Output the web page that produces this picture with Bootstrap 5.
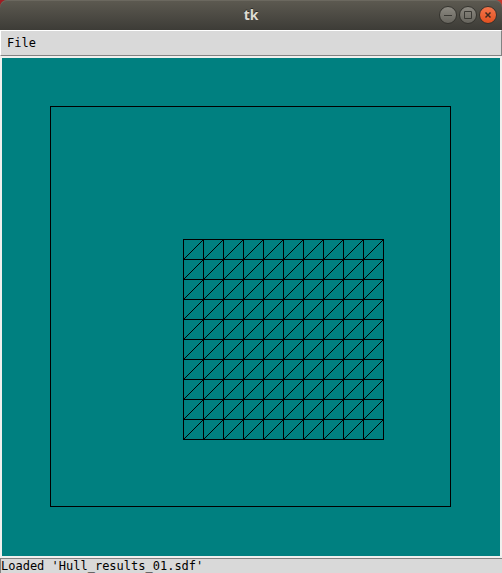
<!DOCTYPE html>
<html lang="en">
<head>
<meta charset="utf-8">
<meta name="viewport" content="width=device-width, initial-scale=1">
<title>tk</title>
<link href="https://cdn.jsdelivr.net/npm/bootstrap@5.3.0/dist/css/bootstrap.min.css" rel="stylesheet">
<style>
body { background: linear-gradient(90deg, #a01c22, #c8372c); color: #000; }
.tk-window { font: 12px/14px "DejaVu Sans Mono", "Liberation Mono", monospace; }
.title-bar { height: 30px; border-radius: 7px 7px 0 0; background: linear-gradient(#5d5a51, #3d3c37); box-shadow: inset 0 1px #6b685f; }
.title-side { flex: 1 1 0; }
.title-text { font: bold 14px/20px "Open Sans", "Noto Sans", sans-serif; color: #dfdbd2; text-shadow: 0 -1px #2c2b27; }
.win-btn { width: 20px; height: 20px; }
.menu-bar { background: #d9d9d9; height: 26px; border: 1px solid; border-color: #fff #828282 #828282 #fff; padding: 0 2px; }
.menu-item { padding: 0 4px; color: #000; }
.plot { background: #008080; border: 2px solid #f0f0ee; min-height: 0; }
.plot svg { width: 100%; height: 100%; }
.status { background: #d9d9d9; height: 15px; border: solid #828282; border-width: 1px 0 0 1px; }
</style>
<script src="https://cdn.jsdelivr.net/npm/bootstrap@5.3.0/dist/js/bootstrap.bundle.min.js"></script>
</head>
<body>
<div class="tk-window d-flex flex-column vh-100">
  <header class="title-bar d-flex align-items-center flex-shrink-0">
    <div class="title-side"></div>
    <h1 class="title-text m-0">tk</h1>
    <div class="title-side d-flex justify-content-end">
      <button type="button" class="win-btn btn p-0 border-0 d-flex" aria-label="Minimize">
        <svg width="20" height="20" viewBox="0 0 20 20"><defs><linearGradient id="g" x2="0" y2="1"><stop stop-color="#8d8a82"/><stop offset="1" stop-color="#65635c"/></linearGradient><linearGradient id="r" x2="0" y2="1"><stop stop-color="#f4764d"/><stop offset="1" stop-color="#e2501f"/></linearGradient></defs><circle cx="10" cy="10" r="8.5" fill="url(#g)" stroke="#33322d"/><path d="M6 10.5h8" stroke="#3a3934"/></svg>
      </button>
      <button type="button" class="win-btn btn p-0 border-0 d-flex" aria-label="Maximize">
        <svg width="20" height="20" viewBox="0 0 20 20"><circle cx="10" cy="10" r="8.5" fill="url(#g)" stroke="#33322d"/><path d="M6.5 6.5h7v7h-7z" fill="none" stroke="#3a3934"/></svg>
      </button>
      <button type="button" class="win-btn btn p-0 border-0 d-flex me-1" aria-label="Close">
        <svg width="20" height="20" viewBox="0 0 20 20"><circle cx="10" cy="10" r="8.5" fill="url(#r)" stroke="#33322d"/><path d="M7.5 7.5l5 5m0-5l-5 5" stroke="#3f2a20" stroke-width="1.5"/></svg>
      </button>
    </div>
  </header>
  <nav class="menu-bar d-flex align-items-center flex-shrink-0">
    <button type="button" class="menu-item bg-transparent border-0">File</button>
  </nav>
  <main class="plot flex-grow-1">
    <svg class="d-block" viewBox="0 0 498 498" role="img" aria-label="Triangulated mesh inside a square boundary">
      <g fill="none" stroke="#000" shape-rendering="crispEdges">
        <path d="M48.5 48.5h400v400h-400z"/>
        <path d="M181 181.5h201M181 201.5h201M181 221.5h201M181 241.5h201M181 261.5h201M181 281.5h201M181 301.5h201M181 321.5h201M181 341.5h201M181 361.5h201M181 381.5h201"/>
        <path d="M181.5 181v201M201.5 181v201M221.5 181v201M241.5 181v201M261.5 181v201M281.5 181v201M301.5 181v201M321.5 181v201M341.5 181v201M361.5 181v201M381.5 181v201"/>
        <path d="M181.5 201.5l20-20M181.5 221.5l40-40M181.5 241.5l60-60M181.5 261.5l80-80M181.5 281.5l100-100M181.5 301.5l120-120M181.5 321.5l140-140M181.5 341.5l160-160M181.5 361.5l180-180M181.5 381.5l200-200M201.5 381.5l180-180M221.5 381.5l160-160M241.5 381.5l140-140M261.5 381.5l120-120M281.5 381.5l100-100M301.5 381.5l80-80M321.5 381.5l60-60M341.5 381.5l40-40M361.5 381.5l20-20"/>
      </g>
    </svg>
  </main>
  <footer class="status flex-shrink-0">Loaded 'Hull_results_01.sdf'</footer>
</div>
</body>
</html>
